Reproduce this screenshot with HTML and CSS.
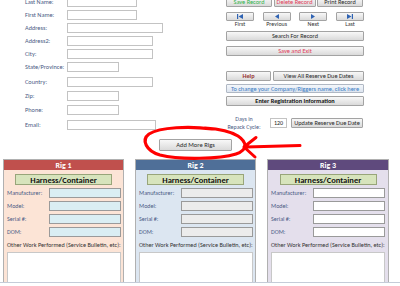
FILE: index.html
```html
<!DOCTYPE html>
<html>
<head>
<meta charset="utf-8">
<link rel="stylesheet" href="styles.css">
</head>
<body>
<div class="page">
  <div class="top">
    <div class="form">
      <div class="frow"><span class="lbl">Last Name:</span><span class="inp w-m"></span></div>
      <div class="frow"><span class="lbl">First Name:</span><span class="inp w-m"></span></div>
      <div class="frow"><span class="lbl">Address:</span><span class="inp w-xl"></span></div>
      <div class="frow"><span class="lbl">Address2:</span><span class="inp w-l"></span></div>
      <div class="frow"><span class="lbl">City:</span><span class="inp w-l"></span></div>
      <div class="frow"><span class="lbl">State/Province:</span><span class="inp w-s"></span></div>
      <div class="frow sp2"><span class="lbl">Country:</span><span class="inp w-l"></span></div>
      <div class="frow sp1"><span class="lbl">Zip:</span><span class="inp w-s"></span></div>
      <div class="frow sp1"><span class="lbl">Phone:</span><span class="inp w-s"></span></div>
      <div class="frow sp2"><span class="lbl">Email:</span><span class="inp w-e"></span></div>
    </div>
    <div class="controls">
      <div class="rec-row">
        <div class="btn green">Save Record</div>
        <div class="btn red">Delete Record</div>
        <div class="btn">Print Record</div>
      </div>
      <div class="nav-row">
        <div class="nav">
          <div class="btn navbtn"><svg width="6" height="5" viewBox="0 0 6 5"><rect x="0" y="0" width="1.2" height="5" fill="#2f63b3"/><polygon points="6,0 6,5 1.5,2.5" fill="#2f63b3"/></svg></div>
          <span>First</span>
        </div>
        <div class="nav">
          <div class="btn navbtn"><svg width="4" height="5" viewBox="0 0 4 5"><polygon points="4,0 4,5 0,2.5" fill="#2f63b3"/></svg></div>
          <span>Previous</span>
        </div>
        <div class="nav">
          <div class="btn navbtn"><svg width="4" height="5" viewBox="0 0 4 5"><polygon points="0,0 0,5 4,2.5" fill="#2f63b3"/></svg></div>
          <span>Next</span>
        </div>
        <div class="nav">
          <div class="btn navbtn"><svg width="6" height="5" viewBox="0 0 6 5"><polygon points="0,0 0,5 4.5,2.5" fill="#2f63b3"/><rect x="4.8" y="0" width="1.2" height="5" fill="#2f63b3"/></svg></div>
          <span>Last</span>
        </div>
      </div>
      <div class="btn full search">Search For Record</div>
      <div class="btn full red exit">Save and Exit</div>
      <div class="help-row">
        <div class="btn help">Help</div>
        <div class="btn view">View All Reserve Due Dates</div>
      </div>
      <div class="btn full link">To change your Company/Riggers name, click here</div>
      <div class="btn full bold reg">Enter Registration Information</div>
      <div class="days-row">
        <div class="days-lbl">Days in<br>Repack Cycle:</div>
        <div class="days-inp">120</div>
        <div class="btn upd">Update Reserve Due Date</div>
      </div>
    </div>
  </div>
  <div class="add-row"><div class="btn add">Add More Rigs</div></div>
  <div class="rigs">
    <div class="rig rig1">
      <div class="rig-head">Rig 1</div>
      <div class="harness">Harness/Container</div>
      <div class="fields">
        <div class="field"><span>Manufacturer:</span><span class="finp"></span></div>
        <div class="field"><span>Model:</span><span class="finp"></span></div>
        <div class="field"><span>Serial #:</span><span class="finp"></span></div>
        <div class="field"><span>DOM:</span><span class="finp"></span></div>
      </div>
      <div class="other">Other Work Performed (Service Bulletin, etc):</div>
      <div class="notes"></div>
    </div>
    <div class="rig rig2">
      <div class="rig-head">Rig 2</div>
      <div class="harness">Harness/Container</div>
      <div class="fields">
        <div class="field"><span>Manufacturer:</span><span class="finp"></span></div>
        <div class="field"><span>Model:</span><span class="finp"></span></div>
        <div class="field"><span>Serial #:</span><span class="finp"></span></div>
        <div class="field"><span>DOM:</span><span class="finp"></span></div>
      </div>
      <div class="other">Other Work Performed (Service Bulletin, etc):</div>
      <div class="notes"></div>
    </div>
    <div class="rig rig3">
      <div class="rig-head">Rig 3</div>
      <div class="harness">Harness/Container</div>
      <div class="fields">
        <div class="field"><span>Manufacturer:</span><span class="finp"></span></div>
        <div class="field"><span>Model:</span><span class="finp"></span></div>
        <div class="field"><span>Serial #:</span><span class="finp"></span></div>
        <div class="field"><span>DOM:</span><span class="finp"></span></div>
      </div>
      <div class="other">Other Work Performed (Service Bulletin, etc):</div>
      <div class="notes"></div>
    </div>
  </div>
  <div class="bottom-line"></div>
  <svg class="annot" width="400" height="286" viewBox="0 0 400 286">
    <path d="M212,129 C190,126 160,127 149,134 C141,140 146,151 160,155 C180,160 220,159 236,154 C248,150 247,142 238,136 C230,131 220,129 205,128" fill="none" stroke="#ff0000" stroke-width="3.2" stroke-linecap="round"/>
    <path d="M300,145.5 L246,147 M256,137.5 L244,147 L255,157" fill="none" stroke="#ff0000" stroke-width="3" stroke-linecap="round" stroke-linejoin="round"/>
  </svg>
</div>
</body>
</html>
```
FILE: styles.css
```css
* { box-sizing: border-box; }
html, body { margin: 0; padding: 0; background: #fff; }
body {
  font-family: "Carlito", "Lato", "Liberation Sans", sans-serif;
  font-size: 6.5px;
  color: #222;
}
.page {
  position: relative;
  width: 400px;
  height: 286px;
  overflow: hidden;
}
.top {
  display: flex;
  margin-top: -3px;
  height: 134px;
}
.form {
  width: 226px;
  padding-left: 25px;
  display: flex;
  flex-direction: column;
  gap: 3px;
}
.frow {
  display: flex;
  align-items: center;
  height: 10px;
}
.frow.sp1 { margin-top: 1px; }
.frow.sp2 { margin-top: 2px; }
.lbl {
  width: 42px;
  color: #4a5a84;
  white-space: nowrap;
  font-size: 6.3px;
}
.inp {
  height: 10px;
  border: 1px solid #c3c3c3;
  background: #fff;
}
.w-s { width: 52px; }
.w-m { width: 70px; }
.w-l { width: 86px; }
.w-xl { width: 96px; }
.w-e { width: 89px; }

.controls {
  width: 138px;
  display: flex;
  flex-direction: column;
}
.btn {
  display: flex;
  align-items: center;
  justify-content: center;
  height: 10px;
  border: 1px solid #a3a3a3;
  border-radius: 1px;
  background: linear-gradient(#f8f8f8, #dadada);
  color: #2a2a2a;
  white-space: nowrap;
  font-size: 6.3px;
}
.green { color: #2fb24b; }
.red { color: #e0405a; }
.bold { font-weight: bold; }
.rec-row {
  display: grid;
  grid-template-columns: 46px 42px 46px;
  gap: 1.5px;
}
.nav-row {
  display: flex;
  justify-content: space-between;
  margin-top: 5px;
  height: 17px;
}
.nav {
  width: 28px;
  display: flex;
  flex-direction: column;
  align-items: center;
}
.nav span {
  font-size: 6px;
  line-height: 7px;
  margin-top: 0px;
  color: #333;
}
.navbtn { width: 28px; height: 9px; }
.search { margin-top: 2px; }
.exit { margin-top: 5px; }
.help-row {
  display: grid;
  grid-template-columns: 45px 91px;
  gap: 2px;
  margin-top: 15px;
}
.help { color: #973534; font-weight: bold; }
.link {
  margin-top: 3px;
  height: 9px;
  color: #3a7cc4;
  background: linear-gradient(#f4f7fb, #dde5ef);
  border-color: #b0b8c4;
}
.reg { margin-top: 3px; color: #111; }
.days-row {
  display: flex;
  align-items: center;
  margin-top: 9px;
  height: 16px;
}
.days-lbl {
  width: 36px;
  text-align: center;
  color: #4a5a84;
  font-size: 6px;
  line-height: 8px;
}
.days-inp {
  margin-left: 8px;
  width: 17px;
  height: 10px;
  border: 1px solid #c3c3c3;
  font-size: 6px;
  display: flex;
  align-items: center;
  justify-content: center;
}
.upd { margin-left: 4px; width: 72px; height: 10px; }

.add-row {
  padding-left: 159px;
  margin-top: 8px;
}
.add { width: 73px; height: 12px; font-size: 6.5px; }

.rigs {
  display: flex;
  gap: 11px;
  padding-left: 3px;
  margin-top: 8px;
  height: 123px;
  overflow: hidden;
}
.rig {
  width: 121px;
  height: 130px;
  border: 1px solid #b0b0b0;
  display: flex;
  flex-direction: column;
}
.rig3 { width: 122px; }
.rig1 { background: #fce4d6; }
.rig2 { background: #dce6f1; }
.rig3 { background: #e4dfec; }
.rig-head {
  height: 10px;
  color: #fff;
  font-weight: bold;
  font-size: 8px;
  display: flex;
  align-items: center;
  justify-content: center;
}
.rig1 .rig-head { background: #c0504d; }
.rig2 .rig-head { background: #4f6f98; }
.rig3 .rig-head { background: #5f4a7d; }
.harness {
  align-self: center;
  margin-top: 4px;
  width: 97px;
  height: 11px;
  background: #d7e4bc;
  border: 1px solid #98a57a;
  font-weight: bold;
  font-size: 8.5px;
  color: #111;
  display: flex;
  align-items: center;
  justify-content: center;
}
.fields {
  margin-top: 3px;
  display: flex;
  flex-direction: column;
  gap: 3px;
  padding-left: 3px;
}
.field {
  display: flex;
  align-items: center;
  height: 10px;
}
.field span:first-child {
  width: 42px;
  color: #4a5a84;
  font-size: 6px;
}
.finp {
  width: 72px;
  height: 10px;
  border: 1px solid #9a9a9a;
}
.rig1 .finp { background: #daeef3; }
.rig2 .finp { background: #ececec; }
.rig3 .finp { background: #fff; }
.other {
  margin-top: 4px;
  padding-left: 3px;
  line-height: 8px;
  font-size: 6.2px;
  color: #333;
  white-space: nowrap;
}
.notes {
  margin-top: 3px;
  margin-left: 3px;
  width: 114px;
  height: 40px;
  background: #fff;
  border: 1px solid #c8c8c8;
}
.bottom-line {
  height: 1px;
  background: #c5ccd8;
}
.annot {
  position: absolute;
  left: 0;
  top: 0;
  pointer-events: none;
}
```
